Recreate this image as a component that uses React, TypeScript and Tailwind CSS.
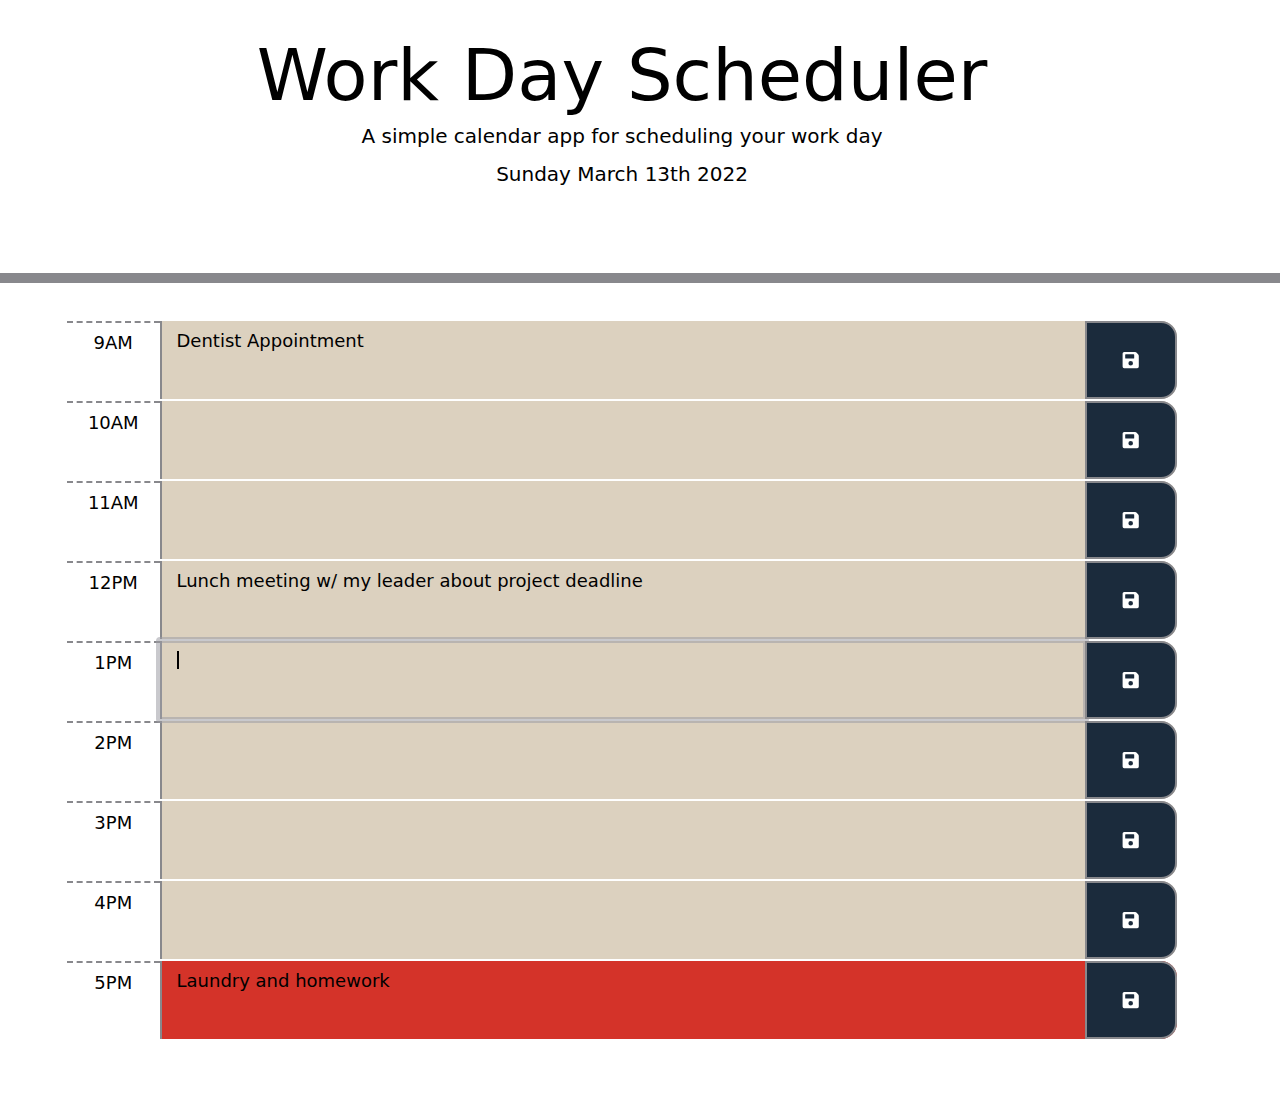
import React from "react";

type Block = { hour: string; text: string; tone: string; focused?: boolean };

const past = "bg-[#dcd1bf]";
const future = "bg-[#d43329]";

const blocks: Block[] = [
  { hour: "9AM", text: "Dentist Appointment", tone: past },
  { hour: "10AM", text: "", tone: past },
  { hour: "11AM", text: "", tone: past },
  { hour: "12PM", text: "Lunch meeting w/ my leader about project deadline", tone: past },
  { hour: "1PM", text: "", tone: past, focused: true },
  { hour: "2PM", text: "", tone: past },
  { hour: "3PM", text: "", tone: past },
  { hour: "4PM", text: "", tone: past },
  { hour: "5PM", text: "Laundry and homework", tone: future },
];

function SaveIcon() {
  return (
    <svg viewBox="0 0 18 18" className="h-[18px] w-[18px]" aria-hidden="true">
      <path
        fill="#fff"
        fillRule="evenodd"
        d="M2.200 1H13.200Q13.900 1 14.400 1.500L16.300 3.600Q16.800 4.200 16.800 4.900V15.600A1.600 1.600 0 0 1 15.200 17.200H2.200A1.600 1.600 0 0 1 .6 15.600V2.600A1.600 1.600 0 0 1 2.200 1ZM3.800 3.200Q3.200 3.200 3.200 3.800V7Q3.200 7.600 3.800 7.600H11.600Q12.200 7.600 12.200 7V3.800Q12.200 3.200 11.600 3.200ZM8.700 10a2.300 2.300 0 1 0 0 4.600a2.300 2.300 0 0 0 0-4.600Z"
      />
    </svg>
  );
}

function TimeBlock({ hour, text, tone, focused }: Block) {
  const id = `slot-${hour}`;
  return (
    <div className={`grid h-[78px] grid-cols-12 rounded-r-2xl ${tone}`}>
      <label
        htmlFor={id}
        className="border-t-2 border-dashed border-[#88888c] bg-white pt-1.5 text-center"
      >
        {hour}
      </label>
      <div className="relative col-span-10">
        <textarea
          id={id}
          defaultValue={text}
          className={`block h-full w-full resize-none overflow-hidden border-l-2 border-[#88888c] px-[15px] pt-1.5 leading-7 outline-none ${tone}`}
        />
        {focused && (
          <>
            <span className="pointer-events-none absolute -inset-1 z-10 rounded-sm border-6 border-[#9c9ca4]/55" />
            <span className="absolute left-[17px] top-2.5 h-[18px] w-0.5 bg-black" />
          </>
        )}
      </div>
      <button
        type="button"
        aria-label={`Save ${hour}`}
        className="relative z-20 flex items-center justify-center rounded-r-2xl border-2 border-[#88888c] bg-[#1b2b3c]"
      >
        <SaveIcon />
      </button>
    </div>
  );
}

export default function App() {
  return (
    <div className="bg-white pb-20 font-['DejaVu_Sans',sans-serif] text-lg leading-7 text-black">
      <header className="border-b-10 border-[#88888c] pb-[79px] pr-9 pt-8 text-center">
        <h1 className="text-7xl leading-[86px]">Work Day Scheduler</h1>
        <p className="text-xl leading-9">A simple calendar app for scheduling your work day</p>
        <p className="text-xl leading-10">Sunday March 13th 2022</p>
      </header>
      <main className="pr-9 pt-[38px]">
        <div className="mx-auto flex max-w-[1110px] flex-col gap-0.5">
          {blocks.map((b) => (
            <TimeBlock key={b.hour} {...b} />
          ))}
        </div>
      </main>
    </div>
  );
}
